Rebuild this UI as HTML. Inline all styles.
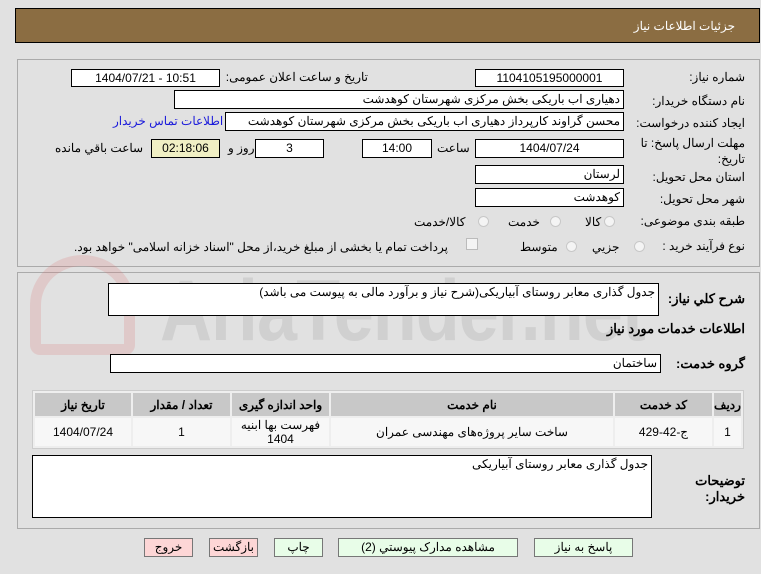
<!DOCTYPE html>
<html><head><meta charset="utf-8"><style>
body{margin:0;width:761px;height:574px;background:#e1e1e1;position:relative;overflow:hidden;font-family:"Liberation Sans","Noto Sans CJK SC",sans-serif;font-size:12px;color:#000}
.a{position:absolute;white-space:nowrap}
.b{position:absolute;background:#fff;border:1px solid #000;box-sizing:border-box;white-space:nowrap;overflow:hidden;line-height:16px;font-size:12px}
.r{direction:rtl;text-align:right;padding-right:3px}
.c{text-align:center}
.l{direction:rtl;text-align:right}
.rad{position:absolute;width:11px;height:11px;border-radius:50%;border:1px solid #c8c8c8;background:#f4f4f4;box-sizing:border-box}
.btn{position:absolute;border:1px solid #777;box-sizing:border-box;text-align:center;line-height:17px;font-size:12px;height:19px;top:538px}
.g{background:#e8fde8}.p{background:#fdd6d6}
table{position:absolute;left:32px;top:390px;width:712px;border-collapse:separate;border-spacing:2px;background:#eee;border:1px solid #ccc;direction:rtl}
th{background:#c8c8c8;height:23px;font-size:12px;font-weight:bold;padding:0}
td{background:#f7f7f7;height:28px;text-align:center;font-size:12px;padding:0;line-height:14px}
</style></head><body>
<div class="a" style="left:15px;top:8px;width:745px;height:35px;background:#8b6d42;border:1px solid #000;box-sizing:border-box"></div>
<div class="a" style="right:26px;top:19px;color:#fff;font-size:12px">جزئیات اطلاعات نیاز</div>

<div class="a" style="left:17px;top:59px;width:743px;height:208px;border:1px solid #aaa;box-sizing:border-box"></div>
<div class="a" style="left:17px;top:272px;width:743px;height:257px;border:1px solid #aaa;box-sizing:border-box"></div>

<div class="a" style="left:160px;top:262px;font-size:72px;font-weight:bold;color:rgba(150,150,150,0.22);letter-spacing:-1px;transform:scaleY(1.2);transform-origin:top">AriaTender.net</div>
<div class="a" style="left:30px;top:255px;width:105px;height:100px;border:11px solid rgba(220,120,120,0.22);border-radius:50% 50% 10px 10px;box-sizing:border-box"></div>

<div class="a l" style="right:16px;top:70px">شماره نیاز:</div>
<div class="b c" style="left:475px;top:69px;width:149px;height:18px">1104105195000001</div>
<div class="a l" style="right:393px;top:70px">تاریخ و ساعت اعلان عمومی:</div>
<div class="b c" style="left:71px;top:69px;width:149px;height:18px">1404/07/21 - 10:51</div>

<div class="a l" style="right:16px;top:94px">نام دستگاه خریدار:</div>
<div class="b r" style="left:174px;top:90px;width:450px;height:19px">دهیاری اب باریکی بخش مرکزی شهرستان کوهدشت</div>

<div class="a l" style="right:16px;top:116px">ایجاد کننده درخواست:</div>
<div class="b r" style="left:225px;top:112px;width:399px;height:19px">محسن گراوند کارپرداز دهیاری اب باریکی بخش مرکزی شهرستان کوهدشت</div>
<div class="a" style="left:113px;top:114px;color:#1a1adb">اطلاعات تماس خریدار</div>

<div class="a l" style="right:16px;top:135px;line-height:16px;text-align:right">مهلت ارسال پاسخ: تا<br>تاریخ:</div>
<div class="b c" style="left:475px;top:139px;width:149px;height:19px">1404/07/24</div>
<div class="a" style="left:437px;top:141px">ساعت</div>
<div class="b c" style="left:362px;top:139px;width:70px;height:19px">14:00</div>
<div class="b c" style="left:255px;top:139px;width:69px;height:19px">3</div>
<div class="a" style="left:228px;top:141px">روز و</div>
<div class="b c" style="left:151px;top:139px;width:69px;height:19px;background:#f0efc4">02:18:06</div>
<div class="a" style="left:55px;top:141px">ساعت باقي مانده</div>

<div class="a l" style="right:16px;top:170px">استان محل تحویل:</div>
<div class="b r" style="left:475px;top:165px;width:149px;height:19px">لرستان</div>
<div class="a l" style="right:16px;top:192px">شهر محل تحویل:</div>
<div class="b r" style="left:475px;top:188px;width:149px;height:19px">کوهدشت</div>

<div class="a l" style="right:16px;top:214px">طبقه بندی موضوعی:</div>
<div class="rad" style="left:604px;top:216px"></div><div class="a" style="left:585px;top:215px">کالا</div>
<div class="rad" style="left:550px;top:216px"></div><div class="a" style="left:508px;top:215px">خدمت</div>
<div class="rad" style="left:478px;top:216px"></div><div class="a" style="left:414px;top:215px">کالا/خدمت</div>

<div class="a l" style="right:16px;top:239px">نوع فرآیند خرید :</div>
<div class="rad" style="left:634px;top:241px"></div><div class="a" style="left:592px;top:240px">جزيي</div>
<div class="rad" style="left:566px;top:241px"></div><div class="a" style="left:520px;top:240px">متوسط</div>
<div class="a" style="left:466px;top:238px;width:12px;height:12px;border:1px solid #bbb;background:#f4f4f4;box-sizing:border-box"></div>
<div class="a l" style="left:74px;top:240px">پرداخت تمام یا بخشی از مبلغ خرید،از محل "اسناد خزانه اسلامی" خواهد بود.</div>

<div class="a l" style="right:16px;top:291px;font-weight:bold;font-size:13px">شرح کلي نياز:</div>
<div class="b r" style="left:108px;top:283px;width:551px;height:33px;line-height:17px;background:#fff">جدول گذاری معابر روستای آبیاریکی(شرح نیاز و برآورد مالی به پیوست می باشد)</div>
<div class="a l" style="right:16px;top:321px;font-weight:bold;font-size:13px">اطلاعات خدمات مورد نیاز</div>
<div class="a l" style="right:16px;top:356px;font-weight:bold;font-size:13px">گروه خدمت:</div>
<div class="b r" style="left:110px;top:354px;width:551px;height:19px">ساختمان</div>

<table>
<tr><th style="width:27px">رديف</th><th style="width:97px">کد خدمت</th><th style="width:282px">نام خدمت</th><th style="width:97px">واحد اندازه گیری</th><th style="width:97px">تعداد / مقدار</th><th>تاریخ نیاز</th></tr>
<tr><td>1</td><td>ج-42-429</td><td>ساخت سایر پروژه‌های مهندسی عمران</td><td>فهرست بها ابنیه<br>1404</td><td>1</td><td>1404/07/24</td></tr>
</table>

<div class="a l" style="right:16px;top:473px;font-weight:bold;font-size:13px;line-height:16px;text-align:right">توضیحات<br>خریدار:</div>
<div class="b r" style="left:32px;top:455px;width:620px;height:63px;line-height:17px;vertical-align:top">جدول گذاری معابر روستای آبیاریکی</div>

<div class="btn g" style="left:534px;width:99px">پاسخ به نیاز</div>
<div class="btn g" style="left:338px;width:180px">مشاهده مدارک پیوستي (2)</div>
<div class="btn g" style="left:274px;width:49px">چاپ</div>
<div class="btn p" style="left:209px;width:49px">بازگشت</div>
<div class="btn p" style="left:144px;width:49px">خروج</div>
</body></html>
